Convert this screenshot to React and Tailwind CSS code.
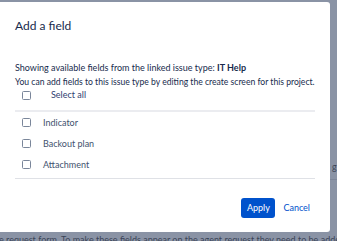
export default function App() {
  const rows = ["Indicator", "Backout plan", "Attachment"];
  const Box = () => (
    <span className="block w-[9px] h-[9px] border border-[#7a869a] rounded-[1.5px] bg-white shrink-0" />
  );
  return (
    <div
      className="relative w-[337px] h-[241px] overflow-hidden bg-[#8a93a5]"
      style={{ fontFamily: 'Lato, "Noto Sans", sans-serif' }}
    >
      {/* page content behind the overlay */}
      <div className="absolute left-[332px] top-[161px] whitespace-nowrap text-[9px] leading-[12px] text-[#3b4457]">g l</div>
      <div className="absolute left-[330px] right-0 top-[179px] h-px bg-[#7d8699]" />
      <div className="absolute left-[-1px] top-[234px] whitespace-nowrap text-[9px] leading-[12px] text-[#3b4457]">
        e request form. To make these fields appear on the agent request they need to be added to
      </div>

      {/* modal */}
      <div className="absolute left-[-3px] top-[2px] w-[333px] h-[230px] bg-white rounded-[3px] pl-[18px] pr-[15px] text-[#172b4d]">
        <h2 className="pt-[16px] text-[12px] leading-[15px] font-normal">Add a field</h2>
        <p className="mt-[27px] text-[9px] leading-[15px]">
          Showing available fields from the linked issue type: <span className="font-bold">IT Help</span>
        </p>
        <p className="text-[8.6px] leading-[15px] whitespace-nowrap">
          You can add fields to this issue type by editing the create screen for this project.
        </p>
        <div className="mt-[1px] flex items-center h-[8px] pl-[7px]">
          <Box />
          <span className="ml-[20px] text-[9px] text-[#2f4170]">Select all</span>
        </div>
        <div className="mt-[11px] w-[300px] h-[2px] bg-[#ebecf0]" />
        {rows.map((r) => (
          <div key={r} className="flex items-center h-[21px] pl-[7px]">
            <Box />
            <span className="ml-[12px] text-[9px] text-[#42526e]">{r}</span>
          </div>
        ))}
        <div className="mt-[3px] w-[300px] h-px bg-[#dfe1e6]" />
        <div className="mt-[19px] flex items-center justify-end gap-[8px] pr-[5px]">
          <button className="h-[20px] w-[34px] rounded-[3px] bg-[#0052cc] text-white text-[9px]">Apply</button>
          <button className="text-[9px] text-[#0052cc]">Cancel</button>
        </div>
      </div>
    </div>
  );
}
